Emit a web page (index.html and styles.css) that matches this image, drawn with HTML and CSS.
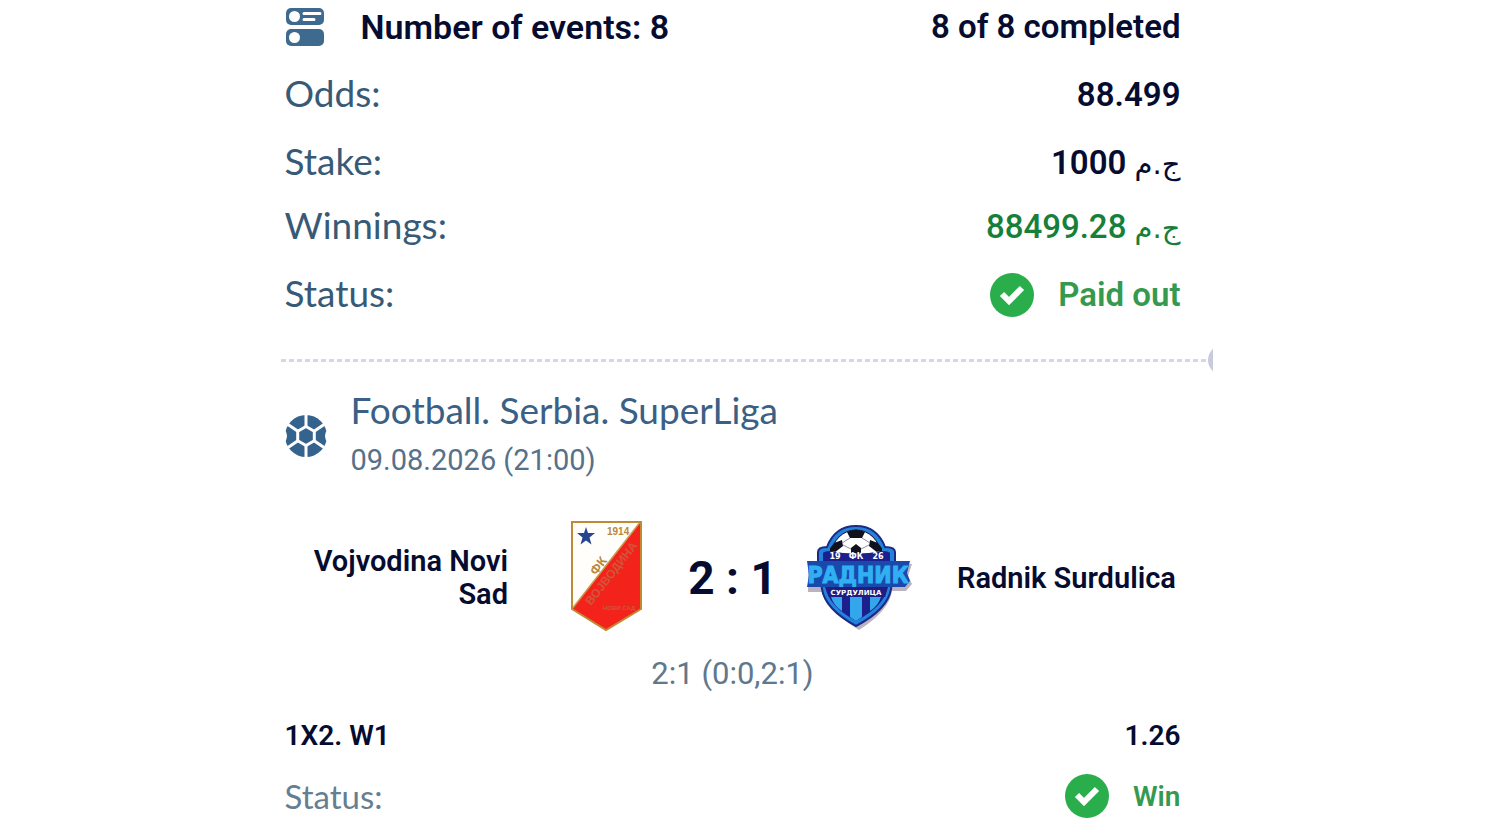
FILE: index.html
```
<!DOCTYPE html>
<html lang="en">
<head>
    <meta charset="UTF-8">
    <meta name="viewport" content="width=device-width, initial-scale=1.0">
    <title>Bet slip</title>

    <link rel="stylesheet" href="styles.css">
</head>
<body>

    <svg class="sprite" aria-hidden="true">
        <symbol id="check" viewBox="0 0 44 44">
            <circle cx="22" cy="22" r="22" fill="#2aad4b"/>
            <path d="M12 21 L19 28 L32 15" fill="none" stroke="#fff" stroke-width="6"/>
        </symbol>
    </svg>

    <main class="slip">
        <section class="summary">
            <header class="row">
                <h1 class="events">
                    <svg class="events-icon" viewBox="0 0 40 40" aria-hidden="true">
                        <rect x="1" y="1" width="38" height="17" rx="5" fill="#3f6a8f"/>
                        <circle cx="9.500" cy="9.500" r="5.500" fill="#fff"/>
                        <path d="M19 6.500h16M19 12.500h10" stroke="#fff" stroke-width="3" stroke-linecap="round"/>
                        <rect x="1" y="22" width="38" height="17" rx="5" fill="#3f6a8f"/>
                        <circle cx="9.500" cy="30.500" r="5.500" fill="#fff"/>
                    </svg>
                    Number of events: 8
                </h1>
                <p class="value">8 of 8 completed</p>
            </header>
            <div class="row">
                <p class="label">Odds:</p>
                <p class="value">88.499</p>
            </div>
            <div class="row">
                <p class="label">Stake:</p>
                <p class="value">1000 <span class="currency" lang="ar">ج.م</span></p>
            </div>
            <div class="row winnings">
                <p class="label">Winnings:</p>
                <p class="value">88499.28 <span class="currency" lang="ar">ج.م</span></p>
            </div>
            <div class="row">
                <p class="label">Status:</p>
                <p class="value paid"><svg class="check" aria-hidden="true"><use href="#check"/></svg>Paid out</p>
            </div>
        </section>

        <div class="divider"></div>

        <section class="event">
            <header class="league">
                <svg class="ball" viewBox="0 0 42 42" aria-hidden="true">
                    <circle cx="21" cy="21" r="21" fill="#34638d"/>
                    <path d="M21 0v13M21 29v13M3 9.500l11 7.500M39 9.500l-11 7.500M3 32.500l11-7.500M39 32.500l-11-7.500" stroke="#fff" stroke-width="3"/>
                    <path d="M21 11.500l8.300 4.750v9.500L21 30.500l-8.300-4.750v-9.500z" fill="#34638d" stroke="#fff" stroke-width="3"/>
                    <path d="M0 15q4 6 0 12zM42 15q-4 6 0 12z" fill="#fff"/>
                </svg>
                <div>
                    <h2 class="league-name">Football. Serbia. SuperLiga</h2>
                    <p class="date">09.08.2026 (21:00)</p>
                </div>
            </header>

            <div class="match">
                <p class="team home">Vojvodina Novi Sad</p>
                <svg class="crest" viewBox="0 5 108 114" role="img" aria-label="Vojvodina">
                    <path d="M19 5h69v88L53 114 19 93z" fill="#fffefa"/>
                    <path d="M88 5v88L53 114 19 93z" fill="#f3231c"/>
                    <path d="M19 93L88 5" stroke="#c99a4c" stroke-width="1.500"/>
                    <path d="M19 6h69v87L53 114 19 93z" fill="none" stroke="#c08a35" stroke-width="2"/>
                    <path d="M33 11l2 6h7l-5.500 4.500 2 7-5.500-4-5.500 4 2-7-5.500-4.500h7z" fill="#26468f"/>
                    <text x="54" y="19" class="crest-year">1914</text>
                    <text transform="translate(43 60) rotate(-52)" class="crest-fk">ФК</text>
                    <text transform="translate(38 90) rotate(-52)" class="crest-name">ВОЈВОДИНА</text>
                    <text x="50" y="94" class="crest-city">НОВИ САД</text>
                </svg>
                <p class="score">2 : 1</p>
                <svg class="crest" viewBox="0 0 108 114" role="img" aria-label="Radnik Surdulica">
                    <path d="M3 41H107L103 53L107 61L101 68H87Q84 88 54 107Q24 88 19 69H3z" fill="#bcb3c2" transform="translate(1 2)"/>
                    <path d="M14 42V31Q14 26 23 26Q31 5 52 5T81 26Q91 26 91 31V42L87 68Q84 88 52 105Q21 88 18 68z" fill="#2383dc" stroke="#1a2b86" stroke-width="2"/>
                    <path d="M19 42V32Q20 30 27 30Q33 9 52 9T77 30Q85 30 86 32V42L83 68Q80 85 52 100Q25 85 22 68z" fill="#1c1f8c"/>
                    <clipPath id="ball-top"><path d="M26 7h52v23q-26 5-52 0z"/></clipPath>
                    <g clip-path="url(#ball-top)">
                        <circle cx="52" cy="33" r="24" fill="#fff" stroke="#111d3a"/>
                        <path d="M43 11q9-5 18 0l-3 6H46zM30 22l8-3 1 6-9 7-6-2zM74 22l-8-3-1 6 9 7 6-2zM47 27l5-4 5 4v8H47z" fill="#10131f"/>
                        <path d="M46 17l-8 5M58 17l8 5M39 24l8 4M65 24l-8 4" stroke="#8a90a0"/>
                    </g>
                    <path d="M27 76h11v14Q30 85 27 76zM46 76h12v20l-6 4-6-4zM66 76h11q-3 9-11 14z" fill="#32a7ec"/>
                    <path d="M3 40H106L103 52L106 60L101 66H3L5 54z" fill="#1a49ae"/>
                    <g class="radnik-year">
                        <text x="31" y="38">19</text>
                        <text x="52" y="38">ФК</text>
                        <text x="74" y="38">26</text>
                    </g>
                    <text x="54" y="62" class="radnik-name">РАДНИК</text>
                    <path d="M21 66h63l-3 10H25z" fill="#201c82"/>
                    <text x="52" y="74" class="radnik-city">СУРДУЛИЦА</text>
                </svg>
                <p class="team away">Radnik Surdulica</p>
            </div>
            <p class="periods">2:1 (0:0,2:1)</p>

            <div class="row bet">
                <p>1X2. W1</p>
                <p>1.26</p>
            </div>
            <div class="row result">
                <p class="label">Status:</p>
                <p class="win"><svg class="check" aria-hidden="true"><use href="#check"/></svg>Win</p>
            </div>
        </section>
    </main>

</body>
</html>
```
FILE: styles.css
```
* {
    box-sizing: border-box;
}

body {
    margin: 0;
    background-color: #fff;
    color: #060c30;
    font-family: Roboto, "DejaVu Sans", sans-serif;
}

h1, h2, p {
    margin: 0;
    font-weight: inherit;
}

.sprite {
    display: block;
    width: 0;
    height: 0;
}

.slip {
    max-width: 932px;
    margin: 0 auto;
    padding-top: 5px;
    overflow: hidden;
}

.summary, .event {
    padding: 0 32px 0 4px;
}

.summary {
    display: flex;
    flex-direction: column;
    gap: 24px;
}

.row {
    display: flex;
    justify-content: space-between;
    align-items: center;
    min-height: 44px;
}

.events {
    display: flex;
    align-items: center;
    gap: 36px;
    font-size: 34px;
    font-weight: 600;
    line-height: 44px;
}

.events-icon {
    width: 40px;
    height: 40px;
}

.label {
    padding-bottom: 4px;
    color: #385a76;
    font-family: Lato, sans-serif;
    font-size: 37px;
    line-height: 40px;
}

.value {
    font-size: 33px;
    font-weight: 600;
    line-height: 44px;
}

.currency {
    font-family: "DejaVu Sans", sans-serif;
    font-size: 29px;
    font-weight: 400;
    line-height: 24px;
}

.winnings {
    margin-top: -4px;
}

.winnings .value {
    color: #16803a;
    font-weight: 500;
}

.paid, .win {
    display: flex;
    align-items: center;
    gap: 24px;
    color: #359a50;
}

.check {
    width: 44px;
    height: 44px;
}

/* perforated line with the cut-out at the edge */
.divider {
    position: relative;
    height: 3px;
    margin-top: 42px;
    background: repeating-linear-gradient(90deg, #d3d8e9 0 5px, transparent 5px 8px);
}

.divider::after {
    content: "";
    position: absolute;
    top: -14px;
    right: -25px;
    width: 30px;
    height: 30px;
    border-radius: 50%;
    background-color: #c9cbdc;
}

.league {
    display: flex;
    align-items: center;
    gap: 24px;
    margin-top: 28px;
    color: #3a6085;
}

.ball {
    width: 42px;
    height: 42px;
}

.league-name {
    padding-bottom: 8px;
    font-family: Lato, sans-serif;
    font-size: 37px;
    line-height: 40px;
}

.date {
    color: #56718a;
    font-size: 29px;
    line-height: 44px;
}

.match {
    display: grid;
    grid-template-columns: 1fr 108px 143px 108px 1fr;
    align-items: center;
    margin-top: 39px;
}

.team {
    font-size: 29px;
    font-weight: 600;
    line-height: 33px;
}

.home {
    padding-right: 45px;
    text-align: right;
}

.away {
    padding-left: 45px;
    white-space: nowrap;
}

.crest {
    width: 108px;
    height: 114px;
}

.score {
    font-size: 46px;
    font-weight: 700;
    text-align: center;
}

.periods {
    margin-top: 23px;
    color: #60788c;
    font-size: 31px;
    line-height: 32px;
    text-align: center;
}

.bet {
    margin-top: 23px;
    font-size: 28px;
    font-weight: 600;
}

.result {
    margin-top: 17px;
}

.result .label {
    padding: 0;
    color: #667e91;
    font-size: 33px;
}

.win {
    font-size: 28px;
    font-weight: 600;
}

.crest-year, .crest-fk, .crest-name, .crest-city {
    fill: #b68a3e;
    font: 700 10px "Liberation Sans", sans-serif;
}

.crest-fk {
    font-size: 13px;
}

.crest-name {
    fill: #d2553a;
    font-size: 12px;
}

.crest-city {
    fill: #d2553a;
    font-size: 6px;
}

.radnik-year, .radnik-name, .radnik-city {
    fill: #fff;
    font: 700 8px "DejaVu Sans", sans-serif;
    text-anchor: middle;
}

.radnik-name {
    fill: #2fb0f2;
    stroke: #2fb0f2;
    font-family: "DejaVu Sans Condensed", "DejaVu Sans", sans-serif;
    font-size: 23px;
}

.radnik-city {
    font-size: 7px;
}
```
